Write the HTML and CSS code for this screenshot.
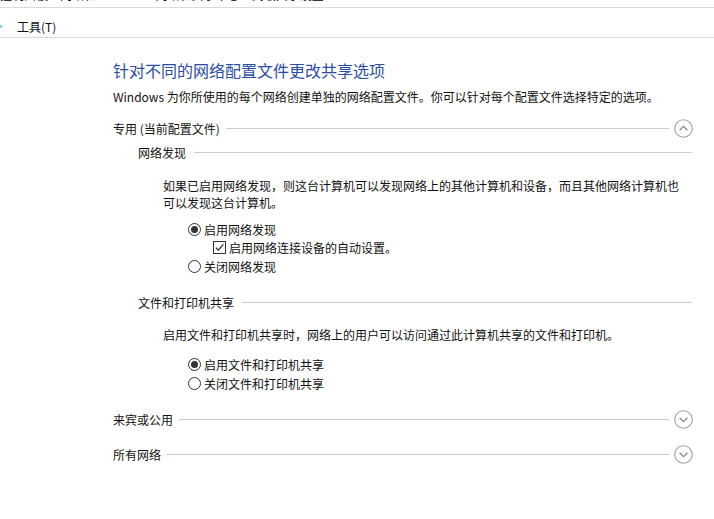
FILE: index.html
```html
<!DOCTYPE html>
<html lang="zh-cn">
<head>
    <meta charset="UTF-8">
    <meta name="viewport" content="width=device-width, initial-scale=1.0">
    <title>高级共享设置</title>
    <link rel="stylesheet" href="styles.css">
</head>
<body>
    <div class="crumb">
        <span class="crumb-text">控制面板 &gt; 网络和 Internet &gt; 网络和共享中心 &gt; 高级共享设置</span>
    </div>
    <div class="menubar">
        <span class="edge-dot"></span>
        <span class="menu-item">工具(T)</span>
    </div>

    <div class="content">
        <h1 class="title">针对不同的网络配置文件更改共享选项</h1>
        <p class="desc">Windows 为你所使用的每个网络创建单独的网络配置文件。你可以针对每个配置文件选择特定的选项。</p>

        <div class="group-head first">
            <span class="label">专用 (当前配置文件)</span>
            <span class="rule"></span>
            <span class="toggle">
                <svg width="19" height="19" viewBox="0 0 19 19"><circle cx="9.5" cy="9.5" r="8.8" fill="none" stroke="#a0a0a0" stroke-width="1.1"/><path d="M5.6 11.2 L9.5 7.3 L13.4 11.2" fill="none" stroke="#8a8a8a" stroke-width="1.3"/></svg>
            </span>
        </div>

        <div class="section">
            <div class="section-head">
                <span class="label">网络发现</span>
                <span class="rule"></span>
            </div>
            <p class="info">如果已启用网络发现，则这台计算机可以发现网络上的其他计算机和设备，而且其他网络计算机也可以发现这台计算机。</p>
            <div class="options">
                <div class="opt"><span class="radio on"></span>启用网络发现</div>
                <div class="opt sub"><span class="check">
                    <svg width="11" height="11" viewBox="0 0 11 11"><path d="M1.8 5.6 L4.3 8.1 L9.4 2.4" fill="none" stroke="#222" stroke-width="1.2"/></svg>
                </span>启用网络连接设备的自动设置。</div>
                <div class="opt"><span class="radio"></span>关闭网络发现</div>
            </div>
        </div>

        <div class="section second">
            <div class="section-head">
                <span class="label">文件和打印机共享</span>
                <span class="rule"></span>
            </div>
            <p class="info single">启用文件和打印机共享时，网络上的用户可以访问通过此计算机共享的文件和打印机。</p>
            <div class="options tight">
                <div class="opt"><span class="radio on"></span>启用文件和打印机共享</div>
                <div class="opt"><span class="radio"></span>关闭文件和打印机共享</div>
            </div>
        </div>

        <div class="group-head guest">
            <span class="label">来宾或公用</span>
            <span class="rule"></span>
            <span class="toggle">
                <svg width="19" height="19" viewBox="0 0 19 19"><circle cx="9.5" cy="9.5" r="8.8" fill="none" stroke="#a0a0a0" stroke-width="1.1"/><path d="M5.6 7.8 L9.5 11.7 L13.4 7.8" fill="none" stroke="#8a8a8a" stroke-width="1.3"/></svg>
            </span>
        </div>

        <div class="group-head all">
            <span class="label">所有网络</span>
            <span class="rule"></span>
            <span class="toggle">
                <svg width="19" height="19" viewBox="0 0 19 19"><circle cx="9.5" cy="9.5" r="8.8" fill="none" stroke="#a0a0a0" stroke-width="1.1"/><path d="M5.6 7.8 L9.5 11.7 L13.4 7.8" fill="none" stroke="#8a8a8a" stroke-width="1.3"/></svg>
            </span>
        </div>
    </div>
</body>
</html>
```

FILE: styles.css
```css
body {
    margin: 0;
    background: #fff;
    color: #111;
    font-family: "Noto Sans CJK SC", "Microsoft YaHei", "Noto Sans", sans-serif;
    font-size: 12px;
}

.crumb {
    height: 7px;
    overflow: hidden;
    border-bottom: 1px solid #dadada;
}

.crumb-text {
    display: block;
    margin-top: -11px;
    line-height: 12px;
    white-space: nowrap;
    color: #000;
}

.menubar {
    height: 30px;
    box-sizing: border-box;
    border-bottom: 1px solid #dadada;
    display: flex;
    align-items: flex-start;
    padding-top: 11px;
}

.edge-dot {
    width: 2px;
    height: 3px;
    margin-top: 6px;
    background: #7fd6ee;
}

.menu-item {
    margin-left: 15px;
    line-height: 16px;
}

.content {
    padding: 0 22px 0 113px;
}

.title {
    margin: 21px 0 0;
    font-size: 16px;
    font-weight: normal;
    line-height: 22px;
    color: #2a4ea3;
}

.desc {
    margin: 7px 0 0;
    line-height: 17px;
}

.group-head {
    display: flex;
    align-items: center;
    height: 20px;
}

.group-head.first {
    margin-top: 13px;
}

.group-head.guest {
    margin-top: 17px;
}

.group-head.all {
    margin-top: 15px;
}

.label {
    line-height: 17px;
    white-space: nowrap;
}

.rule {
    flex: 1;
    height: 1px;
    background: #cbcbcb;
    margin-left: 6px;
}

.toggle {
    display: flex;
    margin-left: 5px;
    margin-right: -1px;
}

.section {
    padding-left: 25px;
}

.section-head {
    display: flex;
    align-items: center;
    height: 17px;
    margin-top: 6px;
}

.section-head .rule {
    margin-left: 8px;
}

.section.second .section-head {
    margin-top: 18px;
}

.info {
    margin: 16px 0 0;
    padding: 0 8px 0 25px;
    line-height: 17px;
}

.info.single {
    margin-top: 15px;
}

.options {
    margin-top: 9px;
    padding-left: 50px;
}

.options.tight {
    margin-top: 13px;
}

.opt {
    display: flex;
    align-items: center;
    height: 18.5px;
}

.opt.sub {
    padding-left: 25px;
}

.radio {
    width: 11px;
    height: 11px;
    border: 1px solid #333;
    border-radius: 50%;
    margin-right: 3px;
    display: flex;
    align-items: center;
    justify-content: center;
}

.radio.on::after {
    content: "";
    width: 7px;
    height: 7px;
    border-radius: 50%;
    background: #333;
}

.check {
    width: 11px;
    height: 11px;
    border: 1px solid #333;
    margin-right: 3px;
    display: flex;
}
```
